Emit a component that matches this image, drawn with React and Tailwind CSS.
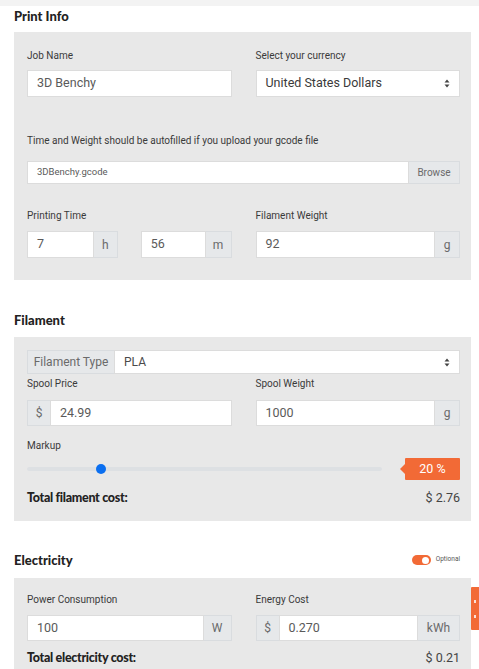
import React, { useState } from "react";

const Label = ({ children, className = "" }) => (
  <div className={`text-[10px] leading-[14px] text-[#3a3a3a] ${className}`}>{children}</div>
);

const Addon = ({ children, size = "text-[12px]", className = "" }) => (
  <div
    className={`flex items-center justify-center bg-[#e6e8ea] border border-[#d9dcdf] text-[#6a6a6a] ${size} ${className}`}
  >
    {children}
  </div>
);

const Field = ({ value, size = "text-[12.5px]", className = "" }) => (
  <div
    className={`flex items-center bg-white border border-[#dcdcdc] px-[9px] text-[#5a5a5a] min-w-0 ${size} ${className}`}
  >
    {value}
  </div>
);

const SelectArrow = () => (
  <svg width="6" height="9" viewBox="0 0 6 9" className="shrink-0">
    <path d="M3 0.5 L5.5 3.5 H0.5 Z" fill="#444" />
    <path d="M3 8.5 L5.5 5.5 H0.5 Z" fill="#444" />
  </svg>
);

const Heading = ({ children, right }) => (
  <div className="flex items-center justify-between h-[16px] pr-[11px]">
    <h2 className="font-['Lato',sans-serif] font-black text-[13px] leading-[16px] text-[#222]">
      {children}
    </h2>
    {right}
  </div>
);

const Total = ({ label, value }) => (
  <div className="flex items-center justify-between h-[16px]">
    <span className="font-['Lato',sans-serif] font-black text-[12.5px] tracking-[-0.3px] text-[#222]">
      {label}
    </span>
    <span className="text-[12.5px] text-[#444]">{value}</span>
  </div>
);

export default function App() {
  const [markup] = useState(20);
  const [optional, setOptional] = useState(true);

  return (
    <div className="relative w-[479px] h-[669px] overflow-hidden bg-white font-['Roboto',sans-serif]">
      <div className="h-[6px] bg-[#f3f3f3]" />

      <div className="pl-[14px] w-[471px]">
        {/* Print Info */}
        <div className="pt-[2px]">
          <Heading>Print Info</Heading>
        </div>
        <div className="mt-[8px] bg-[#e8e8e8] pl-[13px] pr-[11px] pt-[17px] pb-[22px]">
          <div className="grid grid-cols-2 gap-x-[24px]">
            <div>
              <Label>Job Name</Label>
              <Field value="3D Benchy" className="mt-[7px] h-[27px]" />
            </div>
            <div>
              <Label>Select your currency</Label>
              <div className="mt-[7px] h-[27px] flex items-center justify-between bg-white border border-[#dcdcdc] px-[9px] text-[12.5px] text-[#3a3a3a]">
                <span>United States Dollars</span>
                <SelectArrow />
              </div>
            </div>
          </div>

          <Label className="mt-[37px]">
            Time and Weight should be autofilled if you upload your gcode file
          </Label>
          <div className="mt-[13px] h-[23px] flex">
            <Field value="3DBenchy.gcode" size="text-[9.5px]" className="flex-1" />
            <Addon size="text-[10px]" className="w-[51px] border-l-0">Browse</Addon>
          </div>

          <div className="mt-[25px] grid grid-cols-2 gap-x-[24px]">
            <div>
              <Label>Printing Time</Label>
              <div className="mt-[8px] grid grid-cols-2 gap-x-[23px]">
                <div className="flex h-[27px]">
                  <Field value="7" className="flex-1" />
                  <Addon className="w-[24px] border-l-0">h</Addon>
                </div>
                <div className="flex h-[27px]">
                  <Field value="56" className="flex-1" />
                  <Addon className="w-[26px] border-l-0">m</Addon>
                </div>
              </div>
            </div>
            <div>
              <Label>Filament Weight</Label>
              <div className="mt-[8px] flex h-[27px]">
                <Field value="92" className="flex-1" />
                <Addon className="w-[25px] border-l-0">g</Addon>
              </div>
            </div>
          </div>
        </div>

        {/* Filament */}
        <div className="mt-[32px]">
          <Heading>Filament</Heading>
        </div>
        <div className="mt-[9px] bg-[#e8e8e8] pl-[13px] pr-[11px] pt-[13px] pb-[15px]">
          <div className="flex h-[24px]">
            <Addon className="w-[87px] border-r-0">Filament Type</Addon>
            <div className="flex-1 flex items-center justify-between bg-white border border-[#dcdcdc] px-[9px] text-[12px] text-[#4a4a4a]">
              <span>PLA</span>
              <SelectArrow />
            </div>
          </div>

          <div className="mt-[3px] grid grid-cols-2 gap-x-[24px]">
            <div>
              <Label>Spool Price</Label>
              <div className="mt-[9px] flex h-[26px]">
                <Addon className="w-[23px] border-r-0">$</Addon>
                <Field value="24.99" className="flex-1" />
              </div>
            </div>
            <div>
              <Label>Spool Weight</Label>
              <div className="mt-[9px] flex h-[26px]">
                <Field value="1000" className="flex-1" />
                <Addon className="w-[25px] border-l-0">g</Addon>
              </div>
            </div>
          </div>

          <Label className="mt-[13px]">Markup</Label>
          <div className="mt-[5px] flex items-center h-[22px]">
            <div className="relative w-[355px] h-[4px] rounded-full bg-[#dde0e3]">
              <div
                className="absolute top-1/2 w-[10px] h-[10px] -mt-[5px] -ml-[5px] rounded-full bg-[#0b6ff0]"
                style={{ left: `${(markup / 96) * 100}%` }}
              />
            </div>
            <div className="ml-auto flex items-center h-[22px]">
              <div className="w-0 h-0 border-y-[5px] border-y-transparent border-r-[5px] border-r-[#f26a36]" />
              <div className="w-[55px] h-[22px] flex items-center justify-center bg-[#f26a36] text-white text-[12.5px] rounded-[1px]">
                {markup} %
              </div>
            </div>
          </div>

          <div className="mt-[10px]">
            <Total label="Total filament cost:" value="$ 2.76" />
          </div>
        </div>

        {/* Electricity */}
        <div className="mt-[31px]">
          <Heading
            right={
              <button
                type="button"
                onClick={() => setOptional(!optional)}
                className="flex items-center gap-[5px]"
              >
                <span
                  className={`relative w-[19px] h-[10px] rounded-full ${optional ? "bg-[#f26a36]" : "bg-[#ccc]"}`}
                >
                  <span
                    className={`absolute top-[1.5px] w-[7px] h-[7px] rounded-full bg-white ${optional ? "right-[2px]" : "left-[2px]"}`}
                  />
                </span>
                <span className="text-[6.5px] text-[#555]">Optional</span>
              </button>
            }
          >
            Electricity
          </Heading>
        </div>
        <div className="mt-[10px] bg-[#e8e8e8] pl-[13px] pr-[11px] pt-[15px] pb-[15px]">
          <div className="grid grid-cols-2 gap-x-[24px]">
            <div>
              <Label>Power Consumption</Label>
              <div className="mt-[8px] flex h-[26px]">
                <Field value="100" className="flex-1" />
                <Addon className="w-[28px] border-l-0">W</Addon>
              </div>
            </div>
            <div>
              <Label>Energy Cost</Label>
              <div className="mt-[8px] flex h-[26px]">
                <Addon className="w-[23px] border-r-0">$</Addon>
                <Field value="0.270" className="flex-1" />
                <Addon className="w-[42px] border-l-0">kWh</Addon>
              </div>
            </div>
          </div>
          <div className="mt-[9px]">
            <Total label="Total electricity cost:" value="$ 0.21" />
          </div>
        </div>
      </div>

      {/* side feedback tab */}
      <div className="absolute right-0 top-[587px] w-[8px] h-[43px] bg-[#f26a36] flex flex-col items-center justify-center gap-[12px] rounded-l-[1px]">
        <span className="block w-[2px] h-[3px] bg-white/80" />
        <span className="block w-[2px] h-[3px] bg-white/80" />
      </div>
    </div>
  );
}
